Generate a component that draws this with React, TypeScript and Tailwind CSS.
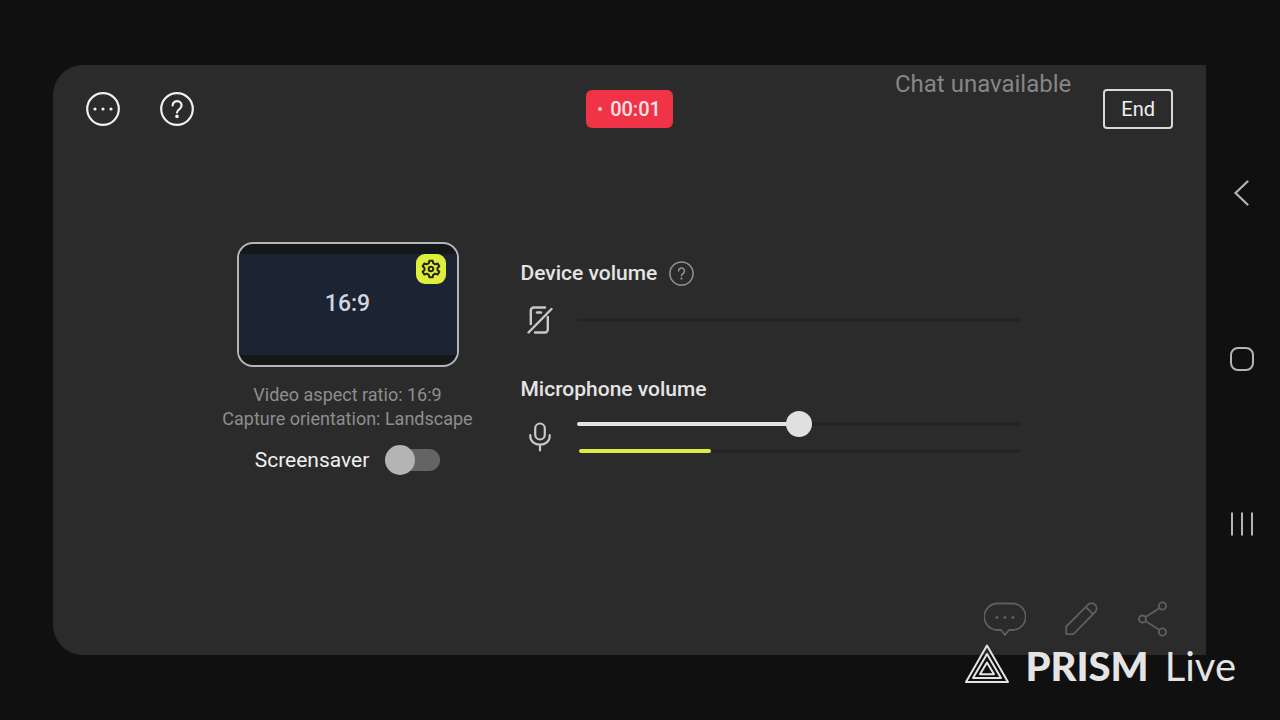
import React, { useState } from 'react';

const MoreIcon = () => (
  <svg className="h-[34px] w-[34px]" viewBox="0 0 34 34" fill="none">
    <circle cx="17" cy="17" r="15.8" stroke="currentColor" strokeWidth={2.2} />
    <circle cx="9" cy="17" r="1.6" fill="currentColor" />
    <circle cx="17" cy="17" r="1.6" fill="currentColor" />
    <circle cx="25" cy="17" r="1.6" fill="currentColor" />
  </svg>
);

const HelpIcon = () => (
  <svg className="h-[34px] w-[34px]" viewBox="0 0 34 34" fill="none" stroke="currentColor" strokeWidth={2.2}>
    <circle cx="17" cy="17" r="15.8" />
    <path strokeLinecap="round" strokeLinejoin="round" d="M12.6 13.4a4.5 4.3 0 1 1 7.2 3.4c-1.8 1.3-2.8 1.9-2.8 3.7" />
    <circle cx="17" cy="24.4" r="1.8" fill="currentColor" stroke="none" />
  </svg>
);

const SmallHelpIcon = () => (
  <svg className="h-[25px] w-[25px]" viewBox="0 0 25 25" fill="none" stroke="currentColor" strokeWidth={1.5}>
    <circle cx="12.5" cy="12.5" r="11.6" />
    <path strokeLinecap="round" strokeLinejoin="round" d="M9.5 9.9a3 2.9 0 1 1 4.8 2.4c-1.2.9-1.8 1.3-1.8 2.5" />
    <circle cx="12.5" cy="17.6" r="1.1" fill="currentColor" stroke="none" />
  </svg>
);

const GearIcon = () => (
  <svg className="h-5 w-5" viewBox="0 0 24 24" fill="none" stroke="currentColor" strokeWidth={2.4} strokeLinejoin="round">
    <path d="M10 2h4l.7 3 2.3 1.4 3-1.1 2 3.5-2.2 2.1v2.2l2.2 2.1-2 3.5-3-1.1-2.3 1.4-.7 3h-4l-.7-3L7 17.6l-3 1.1-2-3.5 2.2-2.1v-2.2L2 8.8l2-3.5 3 1.1L9.3 5z" />
    <circle cx="12" cy="12" r="2.8" />
  </svg>
);

const DeviceOffIcon = () => (
  <svg className="h-7 w-[26px]" viewBox="0 0 26 28" fill="none" stroke="currentColor" strokeWidth={2.4} strokeLinecap="round">
    <path d="M3.8 18V4.5A3 3 0 0 1 6.800 1.5H18" />
    <path d="M20.8 11V23.5a3 3 0 0 1-3 3H8" />
    <path d="M10 6.5h4" />
    <path d="M1.5 26.5 24.5 3" />
  </svg>
);

const MicIcon = () => (
  <svg className="h-[30px] w-[22px]" viewBox="0 0 22 30" fill="none" stroke="currentColor" strokeWidth={2.2} strokeLinecap="round">
    <rect x="6.2" y="1.5" width="9.6" height="16" rx="4.8" />
    <path d="M1.3 13v1.5a9.7 8.2 0 0 0 19.4 0V13M11 22.8V28.5" />
  </svg>
);

const ChatIcon = () => (
  <svg className="h-[34px] w-[42px]" viewBox="0 0 42 34" fill="none" stroke="currentColor" strokeWidth={1.8} strokeLinejoin="round">
    <path d="M13.5 1.5h15a12.5 12.5 0 0 1 0 26.5H25l-4 5-4-5h-3.5a12.5 12.5 0 0 1 0-26.5z" />
    <g fill="currentColor" stroke="none">
      <circle cx="13" cy="15.5" r="1.5" />
      <circle cx="21" cy="15.5" r="1.5" />
      <circle cx="29" cy="15.5" r="1.5" />
    </g>
  </svg>
);

const PencilIcon = () => (
  <svg className="h-[34px] w-[34px]" viewBox="0 0 34 34" fill="none" stroke="currentColor" strokeWidth={1.8} strokeLinejoin="round">
    <path d="M1.2 32.2v-7.7L22.8 2.8a4.8 4.8 0 0 1 7.4 7.2L8.4 32.2zM20.8 5l7.2 7.2" />
  </svg>
);

const ShareIcon = () => (
  <svg className="h-[36px] w-[30px]" viewBox="0 0 30 36" fill="none" stroke="currentColor" strokeWidth={1.9}>
    <circle cx="4.5" cy="18" r="3.5" />
    <circle cx="24.5" cy="5" r="3.6" />
    <circle cx="24.5" cy="31" r="3.6" />
    <path d="M7.5 16 21.5 7.2M7.5 20l14 9" />
  </svg>
);

const PrismLogo = () => (
  <svg className="h-10 w-[44px]" viewBox="0 0 44 40" fill="none" stroke="currentColor" strokeWidth={2} strokeLinejoin="round">
    <path d="M22 1.5 43 38H1z" />
    <path d="M22 10 36 34H8z" />
    <path d="M22 18.5 29 30.2H15z" />
  </svg>
);

interface VolumeSliderProps {
  id: string;
  value: number;
  disabled?: boolean;
  onChange: (value: number) => void;
}

const VolumeSlider: React.FC<VolumeSliderProps> = ({ id, value, disabled, onChange }) => (
  <input
    id={id}
    type="range"
    min={0}
    max={100}
    value={value}
    disabled={disabled}
    onChange={e => onChange(Number(e.target.value))}
    className="block h-1 w-full appearance-none rounded-full [&::-webkit-slider-thumb]:h-[26px] [&::-webkit-slider-thumb]:w-[26px] [&::-webkit-slider-thumb]:appearance-none [&::-webkit-slider-thumb]:rounded-full [&::-webkit-slider-thumb]:bg-[#e0e0e0] disabled:[&::-webkit-slider-thumb]:opacity-0"
    style={{ background: `linear-gradient(to right, #e4e4e4 ${value}%, #242424 ${value}%)` }}
  />
);

const Preview = () => {
  const [screensaver, setScreensaver] = useState(false);

  return (
    <section className="flex w-[252px] shrink-0 flex-col items-center">
      <div className="relative h-[125px] w-[222px] overflow-hidden rounded-2xl border-2 border-[#b4b5b6] bg-[#151819] py-[10px]">
        <div className="flex h-full items-center justify-center bg-[#1c2434] text-[23px] font-medium text-[#d3d6dd]">16:9</div>
        <button aria-label="Video settings" className="absolute top-[10px] right-[11px] flex h-[30px] w-[30px] items-center justify-center rounded-[9px] bg-[#dfee3a] text-[#22240f]">
          <GearIcon />
        </button>
      </div>
      <p className="mt-4 text-center text-[18px] leading-6 whitespace-nowrap text-[#8e8e8e]">
        Video aspect ratio: 16:9<br />
        Capture orientation: Landscape
      </p>
      <label className="mt-[14px] flex items-center gap-4 text-[21px] leading-[30px] text-[#f0f0f0]">
        Screensaver
        <input
          type="checkbox"
          role="switch"
          checked={screensaver}
          onChange={e => setScreensaver(e.target.checked)}
          className="flex h-[22px] w-[55px] appearance-none items-center rounded-full bg-[#646464] before:h-[30px] before:w-[30px] before:rounded-full before:bg-[#b4b4b4] checked:justify-end"
        />
      </label>
    </section>
  );
};

const Volumes = () => {
  const [device, setDevice] = useState(0);
  const [mic, setMic] = useState(50);
  const level = 30;

  return (
    <section className="max-w-[501px] flex-1 pt-[18px] text-[#e4e4e4]">
      <div className="flex h-7 items-center gap-3">
        <label htmlFor="device-volume" className="text-[21px] font-medium">Device volume</label>
        <button aria-label="About device volume" className="text-[#939393]">
          <SmallHelpIcon />
        </button>
      </div>
      <div className="mt-[18px] flex items-center gap-[18px]">
        <div className="flex w-[38px] justify-center text-[#c8c8c8]"><DeviceOffIcon /></div>
        <div className="flex-1"><VolumeSlider id="device-volume" value={device} disabled onChange={setDevice} /></div>
      </div>

      <div className="mt-[42px] flex h-7 items-center">
        <label htmlFor="mic-volume" className="text-[21px] font-medium">Microphone volume</label>
      </div>
      <div className="mt-[18px] flex gap-[18px]">
        <div className="flex w-[38px] justify-center text-[#c8c8c8]"><MicIcon /></div>
        <div className="flex-1">
          <VolumeSlider id="mic-volume" value={mic} onChange={setMic} />
          <div role="meter" aria-label="Microphone level" aria-valuenow={level} aria-valuemin={0} aria-valuemax={100} className="mx-[2px] mt-[23px] h-1 rounded-full bg-[#242424]">
            <div className="h-full rounded-full bg-[#dfea45]" style={{ width: `${level}%` }} />
          </div>
        </div>
      </div>
    </section>
  );
};

const SystemNav = () => (
  <nav className="flex w-[74px] shrink-0 flex-col items-center justify-between pt-[108px] pr-[2px] pb-[111px] text-[#b4b4b4]">
    <button aria-label="Back" className="flex h-10 w-10 items-center justify-center">
      <svg className="h-[26px] w-[26px]" viewBox="0 0 26 26" fill="none" stroke="currentColor" strokeWidth={2.2} strokeLinecap="round">
        <path d="M18.5 1.5 6.5 13l12 11.5" />
      </svg>
    </button>
    <button aria-label="Home" className="flex h-10 w-10 items-center justify-center">
      <svg className="h-[26px] w-[26px]" viewBox="0 0 26 26" fill="none" stroke="currentColor" strokeWidth={2}>
        <rect x="2" y="2" width="22" height="22" rx="7" />
      </svg>
    </button>
    <button aria-label="Recent apps" className="flex h-10 w-10 items-center justify-center">
      <svg className="h-[26px] w-[26px]" viewBox="0 0 26 26" fill="none" stroke="currentColor" strokeWidth={2}>
        <path d="M3 1.5v23M13 1.5v23M23 1.5v23" />
      </svg>
    </button>
  </nav>
);

export default function App() {
  return (
    <div className="relative flex min-h-screen bg-[#101010] py-[65px] pl-[53px] font-['Roboto',sans-serif]">
      <main className="flex flex-1 flex-col rounded-l-[30px] bg-[#2b2b2b]">
        <header className="grid h-[88px] grid-cols-[1fr_auto_1fr] items-center px-[33px] text-[#f0f0f0]">
          <div className="flex gap-10">
            <button aria-label="More"><MoreIcon /></button>
            <button aria-label="Help"><HelpIcon /></button>
          </div>
          <div className="flex h-[38px] items-center gap-2 rounded-md bg-[#f13347] px-3 text-[20px] font-medium text-[#fbe3e5]">
            <span className="h-1 w-1 rounded-full bg-[#f9c9ce]" />
            00:01
          </div>
          <div className="flex h-full items-center justify-end gap-8">
            <span className="self-start pt-[3px] text-[24px] leading-8 text-[#868686]">Chat unavailable</span>
            <button className="h-10 rounded-sm border-2 border-[#d8d8d8] px-4 text-[20px]">End</button>
          </div>
        </header>

        <div className="flex flex-1 items-center justify-center pb-5">
          <div className="flex flex-1 items-start justify-center gap-[47px] pr-4">
            <Preview />
            <Volumes />
          </div>
        </div>

        <footer className="flex h-[72px] items-center justify-end gap-[39px] pr-[38px] text-[#5e5e5e]">
          <button aria-label="Chat"><ChatIcon /></button>
          <button aria-label="Draw"><PencilIcon /></button>
          <button aria-label="Share"><ShareIcon /></button>
        </footer>
      </main>

      <SystemNav />

      {/* watermark over the lower right corner */}
      <div className="absolute right-11 bottom-[34px] flex items-center gap-4 text-[#e4e4e4]">
        <PrismLogo />
        <p className="flex gap-4 pt-1 font-['Lato',sans-serif] text-[40px] leading-10">
          <span className="font-black">PRISM</span>
          <span>Live</span>
        </p>
      </div>
    </div>
  );
}
